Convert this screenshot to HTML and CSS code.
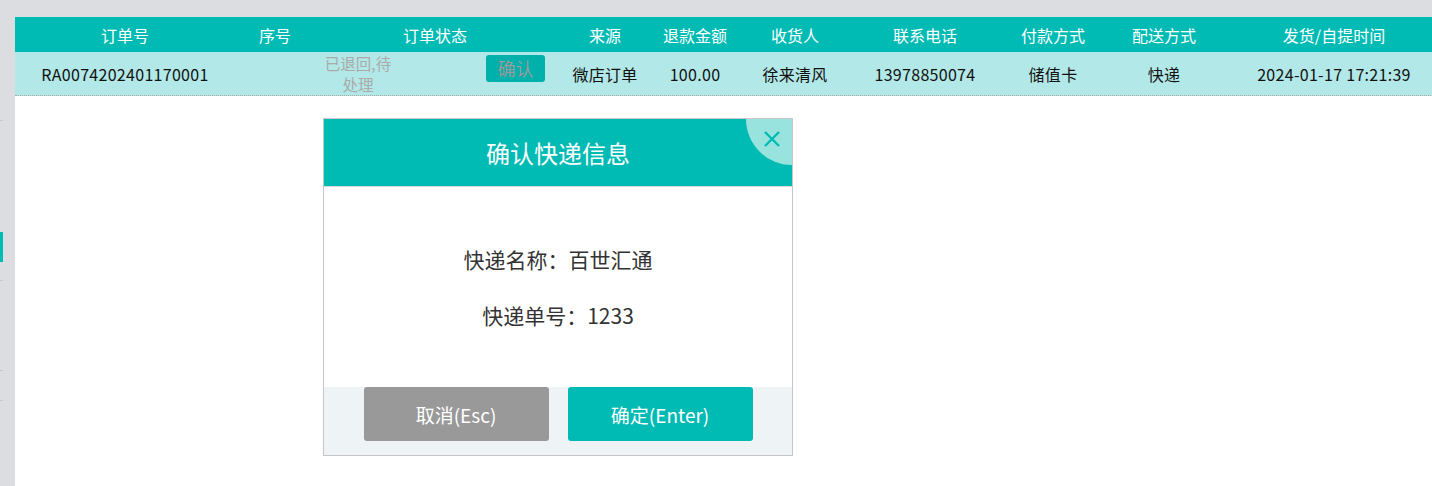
FILE: index.html
```html
<!DOCTYPE html>
<html lang="zh-CN">
<head>
    <meta charset="UTF-8">
    <title>退货订单</title>
    <link rel="stylesheet" href="styles.css">
</head>
<body>
    <div class="sidebar">
        <span class="tick t1"></span>
        <span class="active-mark"></span>
        <span class="tick t2"></span>
        <span class="tick t3"></span>
        <span class="tick t4"></span>
    </div>

    <div class="main">
        <div class="topbar"></div>

        <div class="order-table">
            <div class="row head">
                <div class="cell">订单号</div>
                <div class="cell">序号</div>
                <div class="cell">订单状态</div>
                <div class="cell">来源</div>
                <div class="cell">退款金额</div>
                <div class="cell">收货人</div>
                <div class="cell">联系电话</div>
                <div class="cell">付款方式</div>
                <div class="cell">配送方式</div>
                <div class="cell">发货/自提时间</div>
            </div>
            <div class="row body-row">
                <div class="cell">RA0074202401170001</div>
                <div class="cell"></div>
                <div class="cell status-cell">
                    <span class="status-text">已退回,待处理</span>
                    <span class="confirm-tag">确认</span>
                </div>
                <div class="cell">微店订单</div>
                <div class="cell">100.00</div>
                <div class="cell">徐来清风</div>
                <div class="cell">13978850074</div>
                <div class="cell">储值卡</div>
                <div class="cell">快递</div>
                <div class="cell">2024-01-17 17:21:39</div>
            </div>
        </div>
    </div>

    <div class="dialog">
        <div class="dialog-head">
            确认快递信息
            <span class="close-corner">
                <svg width="18" height="18" viewBox="0 0 18 18">
                    <path d="M2 2 L16 16 M16 2 L2 16" stroke="#00bbb4" stroke-width="2.4" fill="none"/>
                </svg>
            </span>
        </div>
        <div class="dialog-body">
            <p>快递名称：百世汇通</p>
            <p>快递单号：1233</p>
        </div>
        <div class="dialog-foot">
            <button class="btn btn-cancel">取消(Esc)</button>
            <button class="btn btn-ok">确定(Enter)</button>
        </div>
    </div>
</body>
</html>
```

FILE: styles.css
```css
body {
    margin: 0;
    padding: 0;
    height: 486px;
    overflow: hidden;
    display: flex;
    background-color: #fff;
    font-family: "Noto Sans CJK SC", "Noto Sans", sans-serif;
}

.sidebar {
    width: 15px;
    flex-shrink: 0;
    background-color: #dcdde1;
    position: relative;
}

.tick {
    position: absolute;
    left: 0;
    width: 3px;
    height: 1px;
    background-color: #c4c5c9;
}

.t1 { top: 120px; }
.t2 { top: 280px; }
.t3 { top: 370px; }
.t4 { top: 400px; }

.active-mark {
    position: absolute;
    left: 0;
    top: 232px;
    width: 3px;
    height: 30px;
    background-color: #00bbb4;
}

.main {
    flex: 1;
    min-width: 0;
    display: flex;
    flex-direction: column;
}

.topbar {
    height: 17px;
    background-color: #dcdde1;
}

.row {
    display: grid;
    grid-template-columns: 220px 80px 240px 100px 80px 120px 140px 116px 106px 234px;
    width: 1436px;
}

.cell {
    display: flex;
    align-items: center;
    justify-content: center;
    font-size: 16px;
}

.head {
    height: 35px;
    background-color: #00bbb4;
    color: #fff;
}

.body-row {
    height: 43px;
    background-color: #b2e8e7;
    color: #111;
    border-bottom: 1px dotted #a8a8a8;
}

.body-row .cell {
    font-size: 16px;
    letter-spacing: 0.3px;
}

.status-cell {
    justify-content: space-between;
    padding: 0 10px 0 6px;
}

.body-row .status-text {
    width: 74px;
    text-align: center;
    color: #aaa;
    font-size: 15.5px;
    letter-spacing: 0;
    line-height: 21px;
}

.confirm-tag {
    width: 59px;
    height: 27px;
    line-height: 27px;
    margin-top: -10px;
    text-align: center;
    background-color: #00b0ab;
    color: #9a9a9a;
    font-size: 18px;
    letter-spacing: 0;
    border-radius: 3px;
}

.dialog {
    position: absolute;
    left: 323px;
    top: 118px;
    width: 468px;
    border: 1px solid #c6c6c6;
    background-color: #fff;
}

.dialog-head {
    position: relative;
    overflow: hidden;
    height: 67px;
    line-height: 67px;
    text-align: center;
    background-color: #00bbb4;
    color: #fff;
    font-size: 24px;
    border-bottom: 1px solid #d8d8d8;
}

.close-corner {
    position: absolute;
    right: -46px;
    top: -46px;
    width: 92px;
    height: 92px;
    border-radius: 50%;
    background-color: #99e3de;
}

.close-corner svg {
    position: absolute;
    left: 17px;
    top: 57px;
}

.dialog-body {
    height: 200px;
    display: flex;
    flex-direction: column;
    justify-content: center;
    align-items: center;
    gap: 26px;
    color: #333;
    font-size: 21px;
}

.dialog-body p {
    margin: 0;
    line-height: 30px;
}

.dialog-foot {
    height: 68px;
    background-color: #eef3f6;
    display: flex;
    justify-content: center;
    align-items: flex-start;
    gap: 19px;
}

.btn {
    width: 185px;
    height: 54px;
    border: none;
    border-radius: 3px;
    color: #fff;
    font-size: 19px;
    font-family: "Noto Sans CJK SC", "Noto Sans", sans-serif;
}

.btn-cancel {
    background-color: #999;
}

.btn-ok {
    background-color: #00bbb4;
}
```
